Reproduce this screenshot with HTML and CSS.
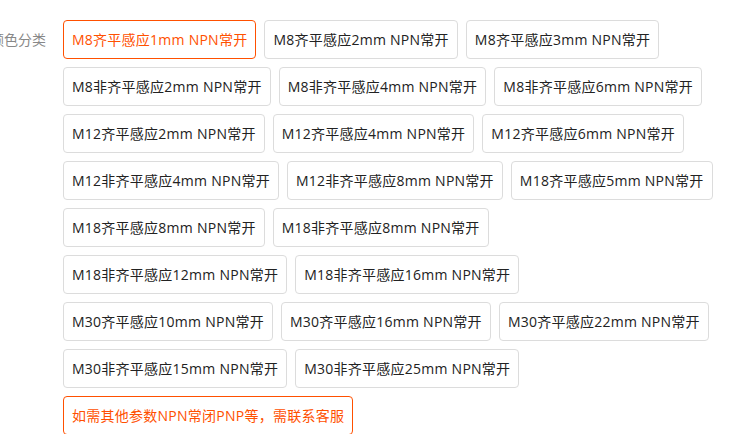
FILE: index.html
```html
<!DOCTYPE html>
<html lang="zh-CN">
<head>
  <meta charset="UTF-8">
  <title>颜色分类</title>
  <link rel="stylesheet" href="styles.css">
</head>
<body>
  <div class="prop">
    <div class="prop-name">颜色分类</div>
    <ul class="prop-list">
      <li class="sku selected">M8齐平感应1mm NPN常开</li>
      <li class="sku">M8齐平感应2mm NPN常开</li>
      <li class="sku">M8齐平感应3mm NPN常开</li>
      <li class="sku">M8非齐平感应2mm NPN常开</li>
      <li class="sku">M8非齐平感应4mm NPN常开</li>
      <li class="sku">M8非齐平感应6mm NPN常开</li>
      <li class="sku">M12齐平感应2mm NPN常开</li>
      <li class="sku">M12齐平感应4mm NPN常开</li>
      <li class="sku">M12齐平感应6mm NPN常开</li>
      <li class="sku">M12非齐平感应4mm NPN常开</li>
      <li class="sku">M12非齐平感应8mm NPN常开</li>
      <li class="sku">M18齐平感应5mm NPN常开</li>
      <li class="sku">M18齐平感应8mm NPN常开</li>
      <li class="sku">M18非齐平感应8mm NPN常开</li>
      <li class="sku">M18非齐平感应12mm NPN常开</li>
      <li class="sku">M18非齐平感应16mm NPN常开</li>
      <li class="sku">M30齐平感应10mm NPN常开</li>
      <li class="sku">M30齐平感应16mm NPN常开</li>
      <li class="sku">M30齐平感应22mm NPN常开</li>
      <li class="sku">M30非齐平感应15mm NPN常开</li>
      <li class="sku">M30非齐平感应25mm NPN常开</li>
      <li class="sku notice">如需其他参数NPN常闭PNP等，需联系客服</li>
    </ul>
  </div>
</body>
</html>
```

FILE: styles.css
```css
body {
  margin: 0;
  padding: 0;
  background: #fff;
  font-family: "Open Sans", "Noto Sans CJK SC", sans-serif;
  font-size: 14px;
  color: #222;
}

.prop {
  display: flex;
  align-items: flex-start;
  padding-top: 20px;
}

.prop-name {
  width: 73px;
  margin-left: -10px;
  flex-shrink: 0;
  line-height: 39px;
  color: #888;
}

.prop-list {
  list-style: none;
  margin: 0;
  padding: 0;
  width: 655px;
  display: flex;
  flex-wrap: wrap;
  gap: 8px;
}

.sku {
  padding: 0 8px;
  line-height: 37px;
  letter-spacing: 0.25px;
  border: 1px solid #dcdcdc;
  border-radius: 4px;
  white-space: nowrap;
}

.sku.selected,
.sku.notice {
  border-color: #ff5000;
  color: #ff5000;
}
```
